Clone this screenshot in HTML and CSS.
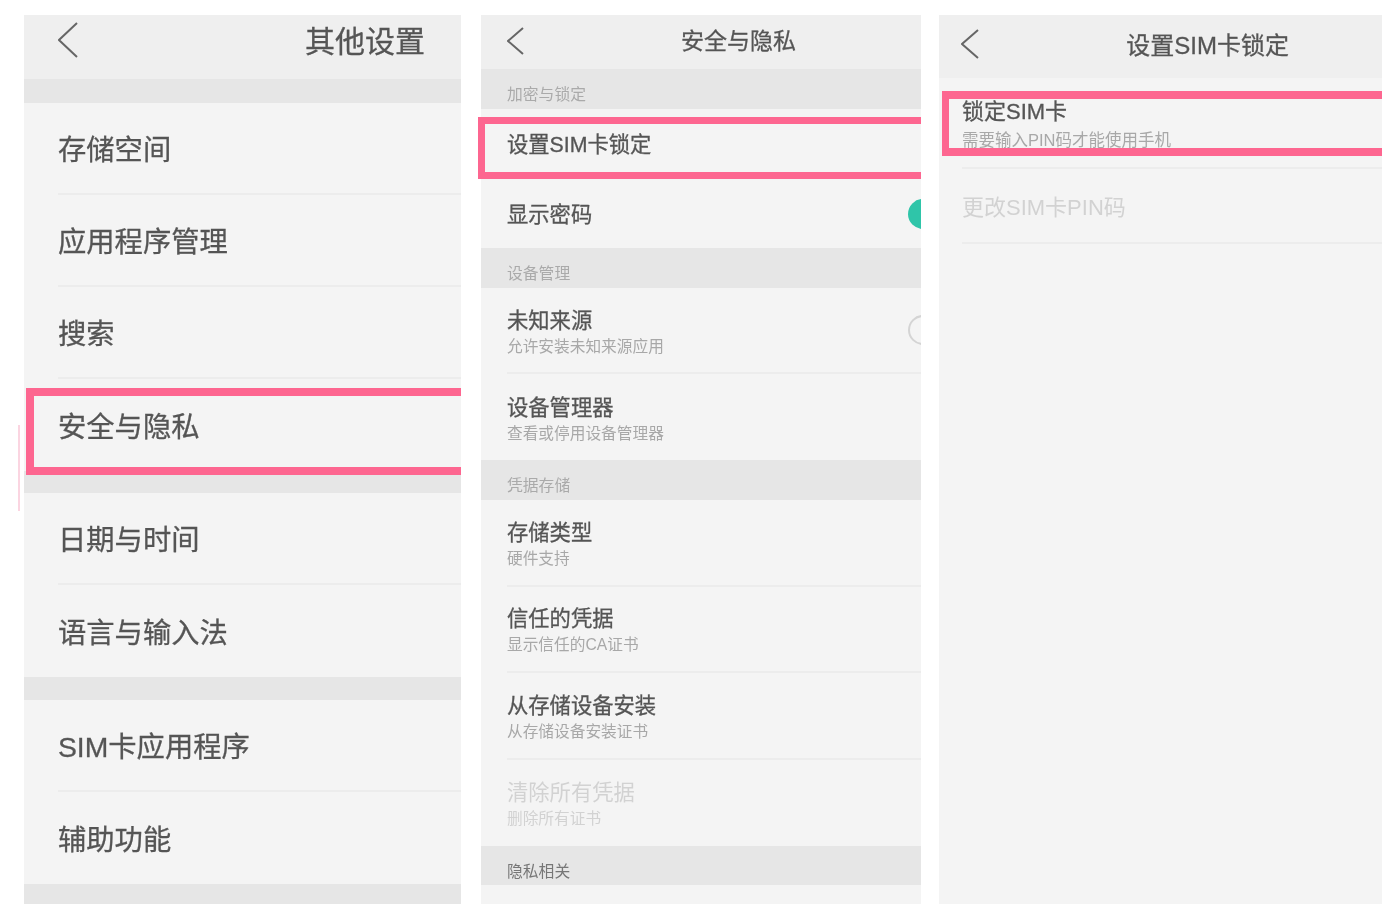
FILE: index.html
```html
<!DOCTYPE html>
<html lang="zh-CN">
<head>
  <meta charset="UTF-8" />
  <title>设置SIM卡锁定</title>
  <link rel="stylesheet" href="styles.css">
</head>
<body>

  <div class="stray-line"></div>

  <!-- 其他设置 -->
  <div class="panel panel-one">
    <div class="top-bar">
      <svg class="back" width="20" height="36" viewBox="0 0 20 36"><polyline points="19,1 1,18 19,35" /></svg>
      <h2>其他设置</h2>
    </div>
    <div class="gap gap-first"></div>
    <div class="list">
      <div class="row"><div class="row-title">存储空间</div></div>
      <div class="row"><div class="row-title">应用程序管理</div></div>
      <div class="row"><div class="row-title">搜索</div></div>
      <div class="row no-line">
        <div class="row-title">安全与隐私</div>
        <div class="mark"></div>
      </div>
    </div>
    <div class="gap gap-mid"></div>
    <div class="list">
      <div class="row"><div class="row-title">日期与时间</div></div>
      <div class="row no-line"><div class="row-title">语言与输入法</div></div>
    </div>
    <div class="gap gap-next"></div>
    <div class="list">
      <div class="row"><div class="row-title">SIM卡应用程序</div></div>
      <div class="row no-line"><div class="row-title">辅助功能</div></div>
    </div>
    <div class="gap gap-last"></div>
  </div>

  <!-- 安全与隐私 -->
  <div class="panel panel-two">
    <div class="top-bar">
      <svg class="back" width="17" height="28" viewBox="0 0 17 28"><polyline points="16,1 1,14 16,27" /></svg>
      <h2>安全与隐私</h2>
    </div>
    <div class="section">加密与锁定</div>
    <div class="list">
      <div class="row row-sim no-line">
        <div class="row-title">设置SIM卡锁定</div>
        <div class="mark"></div>
      </div>
      <div class="row row-pass no-line">
        <div class="row-title">显示密码</div>
        <span class="switch on"></span>
      </div>
    </div>
    <div class="section">设备管理</div>
    <div class="list">
      <div class="row">
        <div>
          <div class="row-title">未知来源</div>
          <div class="row-sub">允许安装未知来源应用</div>
        </div>
        <span class="switch"></span>
      </div>
      <div class="row no-line">
        <div>
          <div class="row-title">设备管理器</div>
          <div class="row-sub">查看或停用设备管理器</div>
        </div>
      </div>
    </div>
    <div class="section">凭据存储</div>
    <div class="list list-store">
      <div class="row">
        <div>
          <div class="row-title">存储类型</div>
          <div class="row-sub">硬件支持</div>
        </div>
      </div>
      <div class="row">
        <div>
          <div class="row-title">信任的凭据</div>
          <div class="row-sub">显示信任的CA证书</div>
        </div>
      </div>
      <div class="row">
        <div>
          <div class="row-title">从存储设备安装</div>
          <div class="row-sub">从存储设备安装证书</div>
        </div>
      </div>
      <div class="row no-line disabled">
        <div>
          <div class="row-title">清除所有凭据</div>
          <div class="row-sub">删除所有证书</div>
        </div>
      </div>
    </div>
    <div class="section section-dark">隐私相关</div>
  </div>

  <!-- 设置SIM卡锁定 -->
  <div class="panel panel-three">
    <div class="top-bar">
      <svg class="back" width="18" height="30" viewBox="0 0 18 30"><polyline points="17,1 1,15 17,29" /></svg>
      <h2>设置SIM卡锁定</h2>
    </div>
    <div class="list">
      <div class="row row-lock">
        <div>
          <div class="row-title">锁定SIM卡</div>
          <div class="row-sub">需要输入PIN码才能使用手机</div>
        </div>
        <div class="mark"></div>
      </div>
      <div class="row row-pin disabled">
        <div class="row-title">更改SIM卡PIN码</div>
      </div>
    </div>
  </div>

</body>
</html>
```

FILE: styles.css
```css
* {
  margin: 0;
  padding: 0;
  box-sizing: border-box;
}

body {
  font-family: "Liberation Sans", "Noto Sans CJK SC", sans-serif;
  background-color: #ffffff;
  color: #555555;
  display: flex;
  align-items: flex-start;
  padding: 15px 0 0 24px;
  position: relative;
  height: 920px;
  overflow: hidden;
}

/* faint leftover edge on the left of the image */
.stray-line {
  position: absolute;
  left: 18px;
  top: 425px;
  width: 2px;
  height: 86px;
  background-color: #fbd5e1;
}

.panel {
  height: 889px;
  background-color: #f4f4f4;
  clip-path: inset(0 0 0 -4px);
}

.panel-one { width: 437px; margin-right: 20px; }
.panel-two { width: 440px; margin-right: 18px; }
.panel-three { width: 443px; }

.top-bar {
  display: flex;
  align-items: center;
  background-color: #efefef;
}

.top-bar h2 {
  margin-left: auto;
  font-weight: 400;
  color: #555555;
  -webkit-text-stroke: 0.3px #555555;
  filter: blur(0.5px);
}

.back polyline {
  fill: none;
  stroke: #666666;
  stroke-width: 2;
}

.panel-one .top-bar { height: 64px; padding: 0 36px 14px 34px; }
.panel-one .top-bar h2 { font-size: 30px; margin-bottom: 2px; }

.panel-two .top-bar { height: 54px; padding: 0 125px 2px 26px; }
.panel-two .top-bar h2 { font-size: 23px; margin-bottom: 4px; }

.panel-three .top-bar { height: 63px; padding: 0 93px 5px 22px; }
.panel-three .top-bar h2 { font-size: 24px; margin-bottom: 2px; }

.gap { background-color: #e6e6e6; }
.gap-first { height: 24px; }
.gap-mid { height: 22px; }
.gap-next { height: 23px; }
.gap-last { height: 20px; }

.section {
  height: 40px;
  padding: 16px 0 0 26px;
  background-color: #e6e6e6;
  color: #aaaaaa;
  font-size: 15.8px;
  line-height: 20px;
  filter: blur(0.4px);
}

.section-dark { color: #777777; height: 39px; }

.list { padding-left: 34px; }
.panel-two .list { padding-left: 26px; }
.panel-three .list { padding-left: 23px; }

.row {
  position: relative;
  display: flex;
  align-items: center;
  height: 92px;
  padding-top: 4px;
  border-bottom: 2px solid #ececec;
}

.row.no-line { border-bottom: none; }

.row-title {
  font-size: 28.3px;
  line-height: 34px;
  color: #555555;
  -webkit-text-stroke: 0.3px #555555;
  filter: blur(0.5px);
}

.row-sub {
  margin-top: 3px;
  font-size: 15.7px;
  line-height: 20px;
  color: #a8a8a8;
  filter: blur(0.5px);
}

.panel-two .row { height: 86px; padding-top: 4px; }
.panel-two .row-title { font-size: 21.3px; line-height: 26px; }
.panel-two .list-store .row { height: 86.5px; }
.panel-two .row.row-sim { height: 71px; align-items: flex-start; padding-top: 23px; }
.panel-two .row.row-pass { height: 68px; padding-top: 2px; }

.panel-three .row-title { font-size: 22px; line-height: 26px; }
.panel-three .row-sub { font-size: 16.5px; margin-top: 5px; }
.panel-three .row-lock { height: 91px; align-items: flex-start; padding-top: 21px; }
.panel-three .row-pin { height: 75px; padding-top: 4px; }

.row.disabled .row-title,
.row.disabled .row-sub {
  color: #d2d2d2;
  -webkit-text-stroke: 0;
}

.switch {
  margin-left: auto;
  margin-right: -17px;
  margin-bottom: 4px;
  width: 30px;
  height: 30px;
  border-radius: 50%;
  border: 2px solid #d4d4d4;
}

.switch.on {
  border: none;
  margin-bottom: 3px;
  background-color: #2fc5a9;
}

/* pink highlight drawn over a row */
.mark {
  position: absolute;
  right: 0;
  border: 8px solid #fd6690;
  border-right: none;
}

.panel-one .mark { left: -32px; top: 9px; height: 87px; }
.panel-two .mark { left: -29px; top: 8px; height: 62px; border-width: 7px 0 7px 7px; }
.panel-three .mark { left: -20px; top: 13px; height: 65px; border-width: 8px 0 8px 7px; }
```
